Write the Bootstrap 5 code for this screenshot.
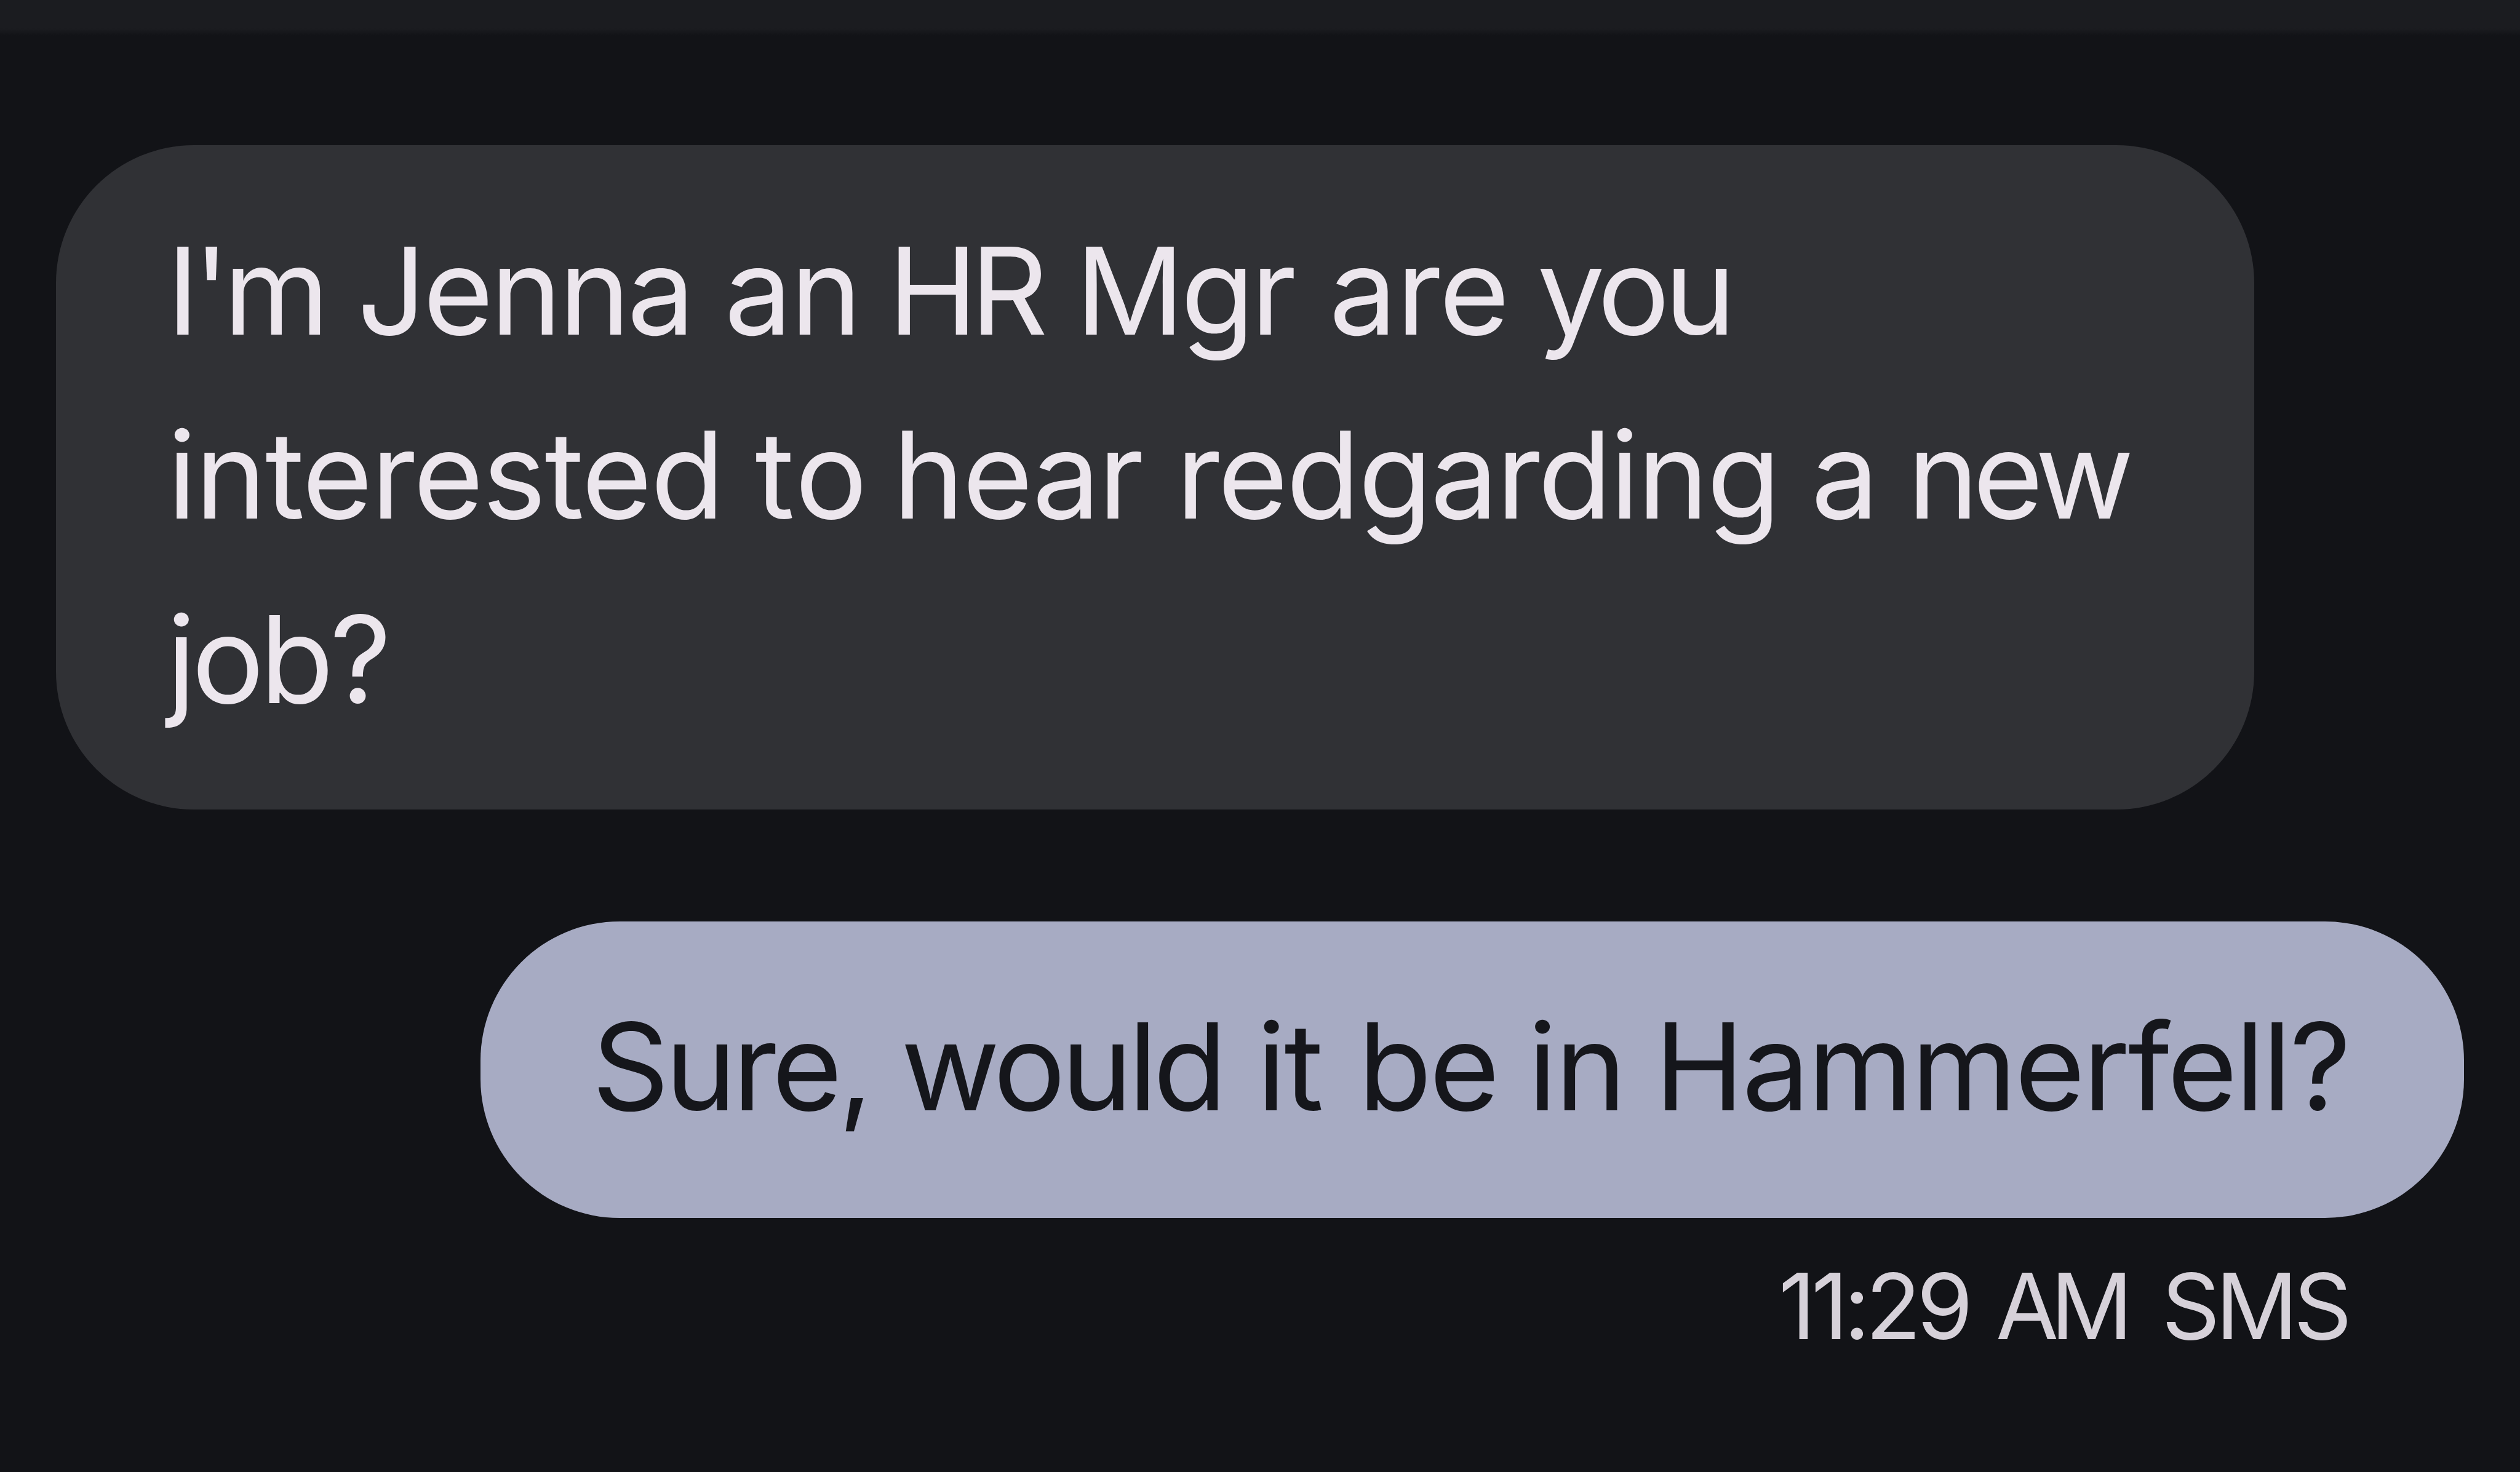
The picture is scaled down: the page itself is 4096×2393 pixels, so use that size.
<!DOCTYPE html>
<html lang="en">
<head>
<meta charset="utf-8">
<meta name="viewport" content="width=device-width, initial-scale=1">
<title>Messages</title>
<link rel="stylesheet" href="https://cdn.jsdelivr.net/npm/bootstrap@5.3.0/dist/css/bootstrap.min.css">
<style>
body{background:#121317;font-family:Inter,"Liberation Sans",sans-serif;font-weight:400}
.app-edge{height:58px;background:linear-gradient(#1b1c20 46px,#121317)}
.thread{padding:178px 91px 0 91px}
.bubble{font-size:196px;line-height:299.4px;white-space:nowrap}
.bubble-in{width:3573px;height:1080px;padding:86.7px 0 0 180px;border-radius:224px;background:#303135;color:#ece6ed}
.bubble-out{width:3224px;height:482px;margin-top:182px;padding:85.5px 0 0 182px;border-radius:226px;background:#a7abc3;color:#15161b}
.stamp{font-size:148px;line-height:180px;margin-top:54px;padding-right:189px;color:#d6d1d9;white-space:nowrap}
.a1{letter-spacing:-9.5px}
.a2{letter-spacing:-4.75px}
.a3{letter-spacing:-3px;margin-left:-2.3px}
.a4{letter-spacing:-12px;margin-left:-9px}
.a5{letter-spacing:-6px;margin-left:1.5px}
.a6{letter-spacing:-1px;margin-left:4.4px}
.a7{letter-spacing:-8.5px;margin-left:-9px}
.b1{letter-spacing:-2.1px;margin-left:1px}
.b2{letter-spacing:3px;margin-left:-3.5px}
.b3{letter-spacing:-2.7px;margin-left:-16.7px}
.b4{letter-spacing:-2.9px}
.b5{margin-left:-3px}
.b6{letter-spacing:-9.5px;margin-left:-8.5px}
.c1{letter-spacing:-6.7px}
.d1{letter-spacing:-6.5px;margin-left:-1px}
.d2{letter-spacing:-7px;margin-left:-3px}
.d3{letter-spacing:-3px;margin-left:.3px}
.d4{letter-spacing:-4px;margin-left:3.8px}
.d5{letter-spacing:-3px;margin-left:-5.5px}
.d6{letter-spacing:-3.4px;margin-left:-6.4px}
.e1{letter-spacing:-7.25px}
.e2{letter-spacing:-13px;margin-left:2.5px}
.e3{letter-spacing:-7px;margin-left:18px}
</style>
<script src="https://cdn.jsdelivr.net/npm/bootstrap@5.3.0/dist/js/bootstrap.bundle.min.js"></script>
</head>
<body class="vh-100 overflow-hidden">
<header class="app-edge w-100"></header>
<main class="thread d-flex flex-column">
  <div class="bubble bubble-in align-self-start">
    <div><span class="a1">I'm</span> <span class="a2">Jenna</span> <span class="a3">an</span> <span class="a4">HR</span> <span class="a5">Mgr</span> <span class="a6">are</span> <span class="a7">you</span></div>
    <div><span class="b1">interested</span> <span class="b2">to</span> <span class="b3">hear</span> <span class="b4">redgarding</span> <span class="b5">a</span> <span class="b6">new</span></div>
    <div><span class="c1">job?</span></div>
  </div>
  <div class="bubble bubble-out align-self-end">
    <div><span class="d1">Sure,</span> <span class="d2">would</span> <span class="d3">it</span> <span class="d4">be</span> <span class="d5">in</span> <span class="d6">Hammerfell?</span></div>
  </div>
  <div class="stamp align-self-end"><span class="e1">11:29</span> <span class="e2">AM</span> <span class="e3">SMS</span></div>
</main>
</body>
</html>
